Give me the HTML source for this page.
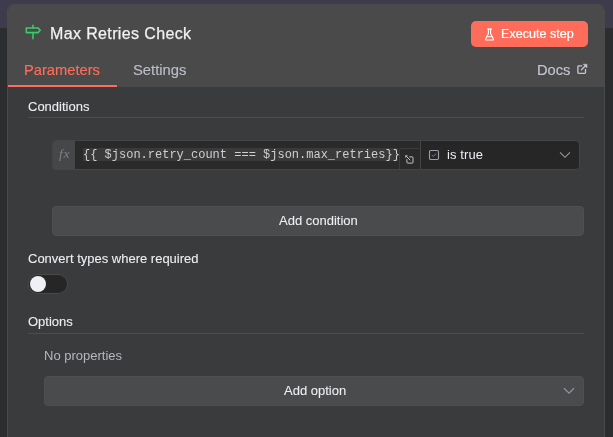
<!DOCTYPE html>
<html><head><meta charset="utf-8">
<style>
*{box-sizing:border-box;margin:0;padding:0}
html,body{width:613px;height:437px;overflow:hidden}
body{background:#2c2d2f;font-family:"Liberation Sans",sans-serif;position:relative}
.topbg{position:absolute;left:0;top:0;width:613px;height:28px;background:#3e3c4c}
.panel{position:absolute;left:7px;top:4px;width:598px;height:460px;background:#3a3b3d;border:1px solid #4a4a4c;border-radius:7px 7px 0 0;overflow:hidden}
.header{position:absolute;left:0;top:0;width:596px;height:82px;background:#4a4a4b}
.abs{position:absolute;white-space:nowrap}
.t{line-height:1;will-change:transform}
</style></head><body>
<div class="topbg"></div>
<div class="panel">
  <div class="header"></div>
</div>
<!-- header content (page coords) -->
<svg class="abs" style="left:22px;top:22px" width="24" height="20" viewBox="22 22 24 20">
  <path d="M26.3 27.9 H38 L40.2 30.25 L38 32.6 H26.3 Z" fill="none" stroke="#3bcb6a" stroke-width="1.55" stroke-linejoin="round"/>
  <path d="M33 25.3 V27.9 M33 32.6 V38.8" stroke="#3bcb6a" stroke-width="1.55" stroke-linecap="round"/>
</svg>
<div class="abs t" style="left:50px;top:25.5px;font-size:16px;letter-spacing:0.37px;color:#f1f1f3;-webkit-text-stroke:0.25px #f1f1f3">Max Retries Check</div>

<div class="abs" style="left:471px;top:21px;width:117px;height:26px;background:#ff6d5a;border-radius:5px"></div>
<svg class="abs" style="left:483.2px;top:27.5px" width="13" height="13" viewBox="0 0 24 24">
  <path d="M10 2v7.527a2 2 0 0 1-.211.896L4.72 20.55a1 1 0 0 0 .9 1.45h12.76a1 1 0 0 0 .9-1.45l-5.069-10.127A2 2 0 0 1 14 9.527V2" fill="none" stroke="#fff" stroke-width="2" stroke-linecap="round" stroke-linejoin="round"/>
  <path d="M8.5 2h7M7 16h10" fill="none" stroke="#fff" stroke-width="2" stroke-linecap="round"/>
</svg>
<div class="abs t" style="left:501px;top:28px;font-size:12.6px;color:#fff;-webkit-text-stroke:0.2px #fff">Execute step</div>

<div class="abs t" style="left:24px;top:63px;font-size:14.7px;color:#ff6d5a;-webkit-text-stroke:0.15px #ff6d5a">Parameters</div>
<div class="abs t" style="left:133px;top:63px;font-size:14.8px;color:#babdc6;-webkit-text-stroke:0.15px #babdc6">Settings</div>
<div class="abs" style="left:8px;top:85px;width:109px;height:2px;background:#ff6d5a"></div>
<div class="abs t" style="left:537px;top:63px;font-size:14.7px;color:#c3c6ce;-webkit-text-stroke:0.15px #c3c6ce">Docs</div>
<svg class="abs" style="left:572px;top:58px" width="20" height="20" viewBox="572 58 20 20">
  <path d="M581.8 65.8 H578.7 Q577.9 65.8 577.9 66.6 V72.6 Q577.9 73.4 578.7 73.4 H584.7 Q585.5 73.4 585.5 72.6 V69.4" fill="none" stroke="#c3c6ce" stroke-width="1.35" stroke-linecap="round"/>
  <path d="M581.4 69.8 L585.2 66" stroke="#c3c6ce" stroke-width="1.35" stroke-linecap="round"/>
  <path d="M583.2 64.2 H587 V68 Z" fill="#c3c6ce" stroke="#c3c6ce" stroke-width="0.5" stroke-linejoin="round"/>
</svg>

<!-- content -->
<div class="abs t" style="left:28px;top:100px;font-size:13px;color:#eceef2;-webkit-text-stroke:0.1px #eceef2">Conditions</div>
<div class="abs" style="left:28px;top:117px;width:556px;height:1px;background:#4c4d50"></div>

<div class="abs" style="left:52px;top:140px;width:368px;height:30px;background:#464749;border-radius:4px 0 0 4px;border:1px solid #444547"></div>
<div class="abs t" style="left:59px;top:147px;font-size:13.5px;letter-spacing:0.8px;font-family:'Liberation Serif',serif;font-style:italic;color:#7e8088">fx</div>
<div class="abs" style="left:75px;top:141px;width:345px;height:28px;background:#2a2a2b"></div>
<div class="abs" style="left:83px;top:148px;width:315px;height:13px;background:#3a3a3b"></div>
<div class="abs t" style="left:83px;top:149px;font-size:12px;font-family:'Liberation Mono',monospace;color:#cfcfd3">{{ $json.retry_count === $json.max_retries}}</div>
<div class="abs" style="left:399px;top:148px;width:20px;height:21px;background:#2a2a2b;border-left:1px solid #3c3c3e;border-top:1px solid #3c3c3e;border-radius:3px 0 0 0"></div>
<svg class="abs" style="left:396px;top:144px" width="28" height="28" viewBox="396 144 28 28">
  <path d="M409.6 156.9 H412.3 Q413 156.9 413 157.6 V162.4 Q413 163.1 412.3 163.1 H407.6 Q406.9 163.1 406.9 162.4 V159.6" fill="none" stroke="#c4c4c8" stroke-width="1" stroke-linecap="round"/>
  <path d="M406.2 156.2 L410 160" stroke="#c4c4c8" stroke-width="1" stroke-linecap="round"/>
  <path d="M405.2 155.2 L408 155.5 L405.5 158 Z" fill="#c4c4c8"/>
</svg>

<div class="abs" style="left:420px;top:140px;width:160px;height:30px;background:#262627;border:1px solid #444547;border-radius:0 4px 4px 0"></div>
<svg class="abs" style="left:428px;top:149px" width="12" height="12" viewBox="0 0 12 12">
  <rect x="1.5" y="1.5" width="9" height="9" rx="1.2" fill="none" stroke="#9d9fa8" stroke-width="1.1"/>
  <path d="M3.8 6 L5.3 7.5 L8.2 4.5" fill="none" stroke="#7c7e86" stroke-width="1"/>
</svg>
<div class="abs t" style="left:447px;top:148px;font-size:13px;letter-spacing:0.1px;color:#eceef2">is true</div>
<svg class="abs" style="left:558px;top:150px" width="14" height="10" viewBox="0 0 14 10">
  <path d="M2 2.3 L7 7.3 L12 2.3" fill="none" stroke="#95979d" stroke-width="1.1"/>
</svg>

<div class="abs" style="left:52px;top:206px;width:532px;height:30px;background:#4a4b4d;border-radius:4px;border:1px solid #4e4f51"></div>
<div class="abs t" style="left:279px;top:214px;font-size:13px;color:#eceef2;-webkit-text-stroke:0.08px #eceef2">Add condition</div>

<div class="abs t" style="left:28px;top:252px;font-size:13px;color:#eceef2;-webkit-text-stroke:0.1px #eceef2">Convert types where required</div>
<div class="abs" style="left:28px;top:274px;width:40px;height:20px;background:#262627;border:1px solid #48494b;border-radius:10px"></div>
<div class="abs" style="left:30px;top:276px;width:16px;height:16px;background:#eef0f6;border-radius:50%"></div>

<div class="abs t" style="left:28px;top:315px;font-size:13px;color:#eceef2;-webkit-text-stroke:0.1px #eceef2">Options</div>
<div class="abs" style="left:28px;top:333px;width:556px;height:1px;background:#4c4d50"></div>
<div class="abs t" style="left:44px;top:349px;font-size:13px;color:#b5b7be">No properties</div>

<div class="abs" style="left:44px;top:376px;width:540px;height:30px;background:#4a4b4d;border-radius:4px;border:1px solid #4e4f51"></div>
<div class="abs t" style="left:283.5px;top:384px;font-size:13px;color:#eceef2;-webkit-text-stroke:0.08px #eceef2">Add option</div>
<svg class="abs" style="left:562px;top:385px" width="14" height="12" viewBox="0 0 14 12">
  <path d="M2 3.2 L7 8.2 L12 3.2" fill="none" stroke="#8f929b" stroke-width="1.3"/>
</svg>
</body></html>
